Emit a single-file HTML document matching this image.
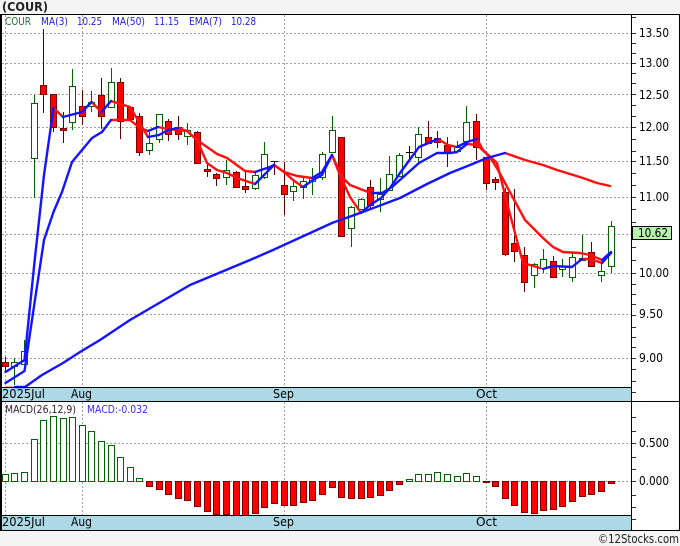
<!DOCTYPE html>
<html>
<head>
<meta charset="utf-8">
<title>COUR</title>
<style>
html,body{margin:0;padding:0;width:680px;height:546px;overflow:hidden;background:#f4f4f4}
svg{display:block}
text{font-family:"DejaVu Sans",sans-serif;font-size:11px}
.y{font-size:12px;fill:#000}
</style>
</head>
<body>
<svg width="680" height="546" viewBox="0 0 680 546" xmlns="http://www.w3.org/2000/svg">
<rect x="0" y="0" width="680" height="546" fill="#f4f4f4"/>
<rect x="0" y="14" width="680" height="517" fill="#fff"/>
<text x="2" y="11" style="font-weight:bold;font-size:12px" textLength="46" lengthAdjust="spacingAndGlyphs" fill="#222">(COUR)</text>

<!-- grid -->
<g stroke="#a0a0a0" stroke-width="1" stroke-dasharray="2 2" fill="none" shape-rendering="crispEdges">
<path d="M2 33.5H632M2 63.5H632M2 94.5H632M2 127.5H632M2 161.5H632M2 197.5H632M2 234.5H632M2 273.5H632M2 314.5H632M2 358.5H632"/>
<path d="M2 443.5H632M2 481.5H632"/>
<path d="M5.5 15V387M82.5 15V387M284.5 15V387M486.5 15V387M5.5 402V515M82.5 402V515M284.5 402V515M486.5 402V515"/>
</g>

<!-- bands -->
<rect x="1" y="387" width="631" height="14" fill="#add8e6"/>
<rect x="1" y="515" width="631" height="15" fill="#add8e6"/>

<!-- candles: green wicks -->
<path fill="none" stroke="#006400" shape-rendering="crispEdges" d="M14.5 358V385M24.5 340V365M34.5 95V198M72.5 69V130M91.5 91V112M111.5 68V108M149.5 132V155M159.5 114V143M187.5 123V145M226.5 160V185M255.5 172V190M264.5 142V179M293.5 180V201M303.5 178V199M312.5 168V195M322.5 152V180M332.5 116V152M351.5 206V247M361.5 198V210M380.5 178V212M389.5 156V190M399.5 153V176M418.5 127V162M457.5 141V151M466.5 106V141M534.5 263V288M543.5 249V273M562.5 259V277M572.5 252V282M582.5 235V260M601.5 263V282M611.5 221V273"/>
<!-- red wicks -->
<path fill="none" stroke="#600000" shape-rendering="crispEdges" d="M5.5 357V372M43.5 29V113M53.5 94V132M63.5 112V143M82.5 90V125M101.5 78V129M120.5 78V139M130.5 106V119M139.5 113V156M168.5 119V141M178.5 116V140M197.5 131V163M207.5 164V177M216.5 173V186M236.5 171V187M245.5 172V193M274.5 161V175M271 161.5H278M284.5 162V215M341.5 137V236M370.5 180V209M428.5 121V143M437.5 131V148M447.5 137V167M476.5 114V160M486.5 157V190M495.5 177V190M505.5 188V256M514.5 189V262M524.5 247V292M553.5 256V277M591.5 242V266"/>
<path fill="none" stroke="#000" shape-rendering="crispEdges" d="M409.5 146V160M406 152.5H413"/>
<!-- green bodies -->
<path fill="#fff" stroke="#006400" shape-rendering="crispEdges" d="M11.5 362.5h6v4h-6zM21.5 351.5h6v13h-6zM31.5 103.5h6v55h-6zM69.5 86.5h6v36h-6zM88.5 102.5h6v4h-6zM108.5 82.5h6v25h-6zM146.5 143.5h6v7h-6zM156.5 114.5h6v25h-6zM184.5 130.5h6v6h-6zM223.5 170.5h6v7h-6zM252.5 175.5h6v13h-6zM261.5 154.5h6v23h-6zM290.5 186.5h6v5h-6zM300.5 181.5h6v6h-6zM309.5 177.5h6v4h-6zM319.5 154.5h6v23h-6zM329.5 130.5h6v22h-6zM348.5 207.5h6v21h-6zM358.5 199.5h6v10h-6zM377.5 194.5h6v5h-6zM386.5 174.5h6v16h-6zM396.5 155.5h6v21h-6zM415.5 134.5h6v23h-6zM454.5 147.5h6v4h-6zM463.5 122.5h6v19h-6zM531.5 264.5h6v11h-6zM540.5 259.5h6v9h-6zM559.5 266.5h6v3h-6zM569.5 257.5h6v20h-6zM579.5 258.5h6v2h-6zM598.5 271.5h6v4h-6zM608.5 226.5h6v40h-6z"/>
<!-- red bodies -->
<path fill="#f00" stroke="#800000" shape-rendering="crispEdges" d="M2.5 362.5h6v4h-6zM40.5 85.5h6v9h-6zM50.5 94.5h6v33h-6zM60.5 128.5h6v2h-6zM79.5 106.5h6v10h-6zM98.5 95.5h6v21h-6zM117.5 82.5h6v39h-6zM127.5 107.5h6v12h-6zM136.5 116.5h6v36h-6zM165.5 121.5h6v13h-6zM175.5 127.5h6v7h-6zM194.5 132.5h6v31h-6zM204.5 169.5h6v2h-6zM213.5 174.5h6v4h-6zM233.5 172.5h6v15h-6zM242.5 186.5h6v3h-6zM281.5 185.5h6v9h-6zM338.5 137.5h6v99h-6zM367.5 187.5h6v18h-6zM425.5 137.5h6v6h-6zM434.5 138.5h6v4h-6zM444.5 145.5h6v8h-6zM473.5 121.5h6v26h-6zM483.5 157.5h6v26h-6zM492.5 179.5h6v3h-6zM502.5 192.5h6v62h-6zM511.5 243.5h6v8h-6zM521.5 255.5h6v27h-6zM550.5 261.5h6v16h-6zM588.5 252.5h6v14h-6z"/>

<!-- lines -->
<g fill="none" stroke-width="2.4" stroke-linejoin="round" stroke-linecap="round">
<g stroke="#ff1010">
<polyline points="5.5,387 15,387" stroke-width="1.5" stroke="#ff8080"/>
<polyline points="505,153 525,160 543,165 557,170 583,178 597,183 610,186"/>
<polyline points="53.5,108 63,117"/>
<polyline points="91.5,102 101.5,112"/>
<polyline points="111,101 130,107 148,137"/>
<polyline points="178,128 187,131 197,140 207,163 217,170 227,173 237,178 255,184"/>
<polyline points="274,165 284,172 293,180 303,187"/>
<polyline points="332,155 340,175 350,197 361,213"/>
<polyline points="438,139 448,145 457,147"/>
<polyline points="477,139 483,150 497,163 507,203 515,233 523,263 540,268"/>
<polyline points="582,259 590,259 602,263"/>
<polyline points="111,120 130,120 140,128 148,131"/>
<polyline points="158,127 168,129 187,131 197,140 217,154 227,158 245,171 255,172"/>
<polyline points="274,165 284,172 297,176 312,178"/>
<polyline points="332,155 342,177 350,185 368,192"/>
<polyline points="467,144 477,145 490,157 498,170 525,220 543,238 553,247 563,252 580,253 590,255 602,260"/>
</g>
<g stroke="#1414ff">
<polyline points="15,387 25,387 42,375 63,363 80,352 100,340 130,320 190,285 250,260 273,250 332,223 360,213 400,198 427,184 450,173 470,165 487,158 505,153"/>
<polyline points="5.5,372 24.5,360 34.5,262 44,175 53.5,108"/>
<polyline points="63,117 82,112 91.5,102"/>
<polyline points="101.5,112 111,101"/>
<polyline points="148,137 159,135 168,130 178,128"/>
<polyline points="255,184 274,165"/>
<polyline points="303,187 313,180 322,175 332,155"/>
<polyline points="361,213 370,205 381,198 390,188 400,173 419,147 438,139"/>
<polyline points="457,147 467,142 477,139"/>
<polyline points="543,269 553,266 572,267 582,259"/>
<polyline points="602,263 611,253"/>
<polyline points="5.5,383 24.5,371 34.5,303 44,240 53.5,212 62,192 72,162 92,138 102,132 111,120"/>
<polyline points="148,131 158,127"/>
<polyline points="255,172 270,167 274,165"/>
<polyline points="312,178 322,172 332,155"/>
<polyline points="372,193 382,193 392,187 419,163 437,153 450,153 457,152 467,144"/>
<polyline points="602,260 611,252"/>
</g>
</g>

<!-- MACD bars -->
<path fill="#fff" stroke="#006400" shape-rendering="crispEdges" d="M2.5 474.5h6v7h-6zM11.5 473.5h6v8h-6zM21.5 472.5h6v9h-6zM31.5 439.5h6v42h-6zM40.5 420.5h6v61h-6zM50.5 416.5h6v65h-6zM60.5 418.5h6v63h-6zM69.5 417.5h6v64h-6zM79.5 425.5h6v56h-6zM88.5 431.5h6v50h-6zM98.5 441.5h6v40h-6zM108.5 445.5h6v36h-6zM117.5 457.5h6v24h-6zM127.5 467.5h6v14h-6zM136.5 478.5h6v3h-6zM406.5 479.5h6v2h-6zM415.5 474.5h6v7h-6zM425.5 474.5h6v7h-6zM434.5 472.5h6v9h-6zM444.5 474.5h6v7h-6zM454.5 476.5h6v5h-6zM463.5 473.5h6v8h-6zM473.5 476.5h6v5h-6z"/>
<path fill="#f00" stroke="#800000" shape-rendering="crispEdges" d="M146.5 481.5h6v5h-6zM156.5 481.5h6v8h-6zM165.5 481.5h6v13h-6zM175.5 481.5h6v17h-6zM184.5 481.5h6v19h-6zM194.5 481.5h6v25h-6zM204.5 481.5h6v30h-6zM213.5 481.5h6v33h-6zM223.5 481.5h6v33h-6zM233.5 481.5h6v34h-6zM242.5 481.5h6v34h-6zM252.5 481.5h6v32h-6zM261.5 481.5h6v26h-6zM271.5 481.5h6v22h-6zM281.5 481.5h6v24h-6zM290.5 481.5h6v24h-6zM300.5 481.5h6v21h-6zM309.5 481.5h6v19h-6zM319.5 481.5h6v13h-6zM329.5 481.5h6v6h-6zM338.5 481.5h6v16h-6zM348.5 481.5h6v17h-6zM358.5 481.5h6v17h-6zM367.5 481.5h6v16h-6zM377.5 481.5h6v14h-6zM386.5 481.5h6v9h-6zM396.5 481.5h6v3h-6zM483.5 481.5h6v1h-6zM492.5 481.5h6v5h-6zM502.5 481.5h6v17h-6zM511.5 481.5h6v24h-6zM521.5 481.5h6v31h-6zM531.5 481.5h6v32h-6zM540.5 481.5h6v29h-6zM550.5 481.5h6v28h-6zM559.5 481.5h6v25h-6zM569.5 481.5h6v20h-6zM579.5 481.5h6v15h-6zM588.5 481.5h6v13h-6zM598.5 481.5h6v10h-6zM608.5 481.5h6v2h-6z"/>

<!-- frame -->
<g fill="none" stroke="#000" shape-rendering="crispEdges">
<path d="M0 14.5H680M0 401.5H680M0 530.5H680M0 387.5H632M0 515.5H632"/>
<path d="M.5 14V531M1.5 14V531M631.5 14V531M679.5 14V531"/>
<path stroke="#333" d="M632 17.5h4M632 33.5h4M632 43.5h4M632 53.5h4M632 63.5h4M632 73.5h4M632 83.5h4M632 94.5h4M632 105.5h4M632 116.5h4M632 127.5h4M632 139.5h4M632 151.5h4M632 161.5h4M632 173.5h4M632 185.5h4M632 197.5h4M632 209.5h4M632 222.5h4M632 234.5h4M632 247.5h4M632 260.5h4M632 273.5h4M632 284.5h4M632 294.5h4M632 304.5h4M632 315.5h4M632 327.5h4M632 337.5h4M632 347.5h4M632 358.5h4M632 369.5h4M632 381.5h4M632 392.5h4M632 417.5h4M632 431.5h4M632 443.5h4M632 457.5h4M632 469.5h4M632 481.5h4M632 495.5h4M632 507.5h4M632 519.5h4"/>
</g>

<!-- legend -->
<text x="5" y="25" fill="#2a6a3a" textLength="26" lengthAdjust="spacingAndGlyphs" style="font-size:11px">COUR</text>
<text x="41" y="25" fill="#2020e0" textLength="27" lengthAdjust="spacingAndGlyphs" style="font-size:11px">MA(3)</text>
<text x="77" y="25" fill="#2020e0" textLength="25" lengthAdjust="spacingAndGlyphs" style="font-size:11px">10.25</text>
<text x="112" y="25" fill="#2020e0" textLength="33" lengthAdjust="spacingAndGlyphs" style="font-size:11px">MA(50)</text>
<text x="154" y="25" fill="#2020e0" textLength="25" lengthAdjust="spacingAndGlyphs" style="font-size:11px">11.15</text>
<text x="189" y="25" fill="#2020e0" textLength="33" lengthAdjust="spacingAndGlyphs" style="font-size:11px">EMA(7)</text>
<text x="231" y="25" fill="#2020e0" textLength="25" lengthAdjust="spacingAndGlyphs" style="font-size:11px">10.28</text>

<!-- y labels -->
<text class="y" x="639" y="37" textLength="30" lengthAdjust="spacingAndGlyphs">13.50</text>
<text class="y" x="639" y="67" textLength="30" lengthAdjust="spacingAndGlyphs">13.00</text>
<text class="y" x="639" y="99" textLength="30" lengthAdjust="spacingAndGlyphs">12.50</text>
<text class="y" x="639" y="131" textLength="30" lengthAdjust="spacingAndGlyphs">12.00</text>
<text class="y" x="639" y="165" textLength="30" lengthAdjust="spacingAndGlyphs">11.50</text>
<text class="y" x="639" y="201" textLength="30" lengthAdjust="spacingAndGlyphs">11.00</text>
<text class="y" x="639" y="277" textLength="30" lengthAdjust="spacingAndGlyphs">10.00</text>
<text class="y" x="639" y="318" textLength="24" lengthAdjust="spacingAndGlyphs">9.50</text>
<text class="y" x="639" y="362" textLength="24" lengthAdjust="spacingAndGlyphs">9.00</text>
<text class="y" x="639" y="447" textLength="30" lengthAdjust="spacingAndGlyphs">0.500</text>
<text class="y" x="639" y="485" textLength="30" lengthAdjust="spacingAndGlyphs">0.000</text>
<rect x="632.5" y="226.5" width="39" height="13" fill="#b6f2ac" stroke="#000" shape-rendering="crispEdges"/>
<text class="y" x="638" y="237" textLength="30" lengthAdjust="spacingAndGlyphs">10.62</text>

<!-- band labels -->
<text class="y" x="2" y="398" textLength="43" lengthAdjust="spacingAndGlyphs">2025Jul</text>
<text class="y" x="71" y="398" textLength="21" lengthAdjust="spacingAndGlyphs">Aug</text>
<text class="y" x="273" y="398" textLength="21" lengthAdjust="spacingAndGlyphs">Sep</text>
<text class="y" x="476" y="398" textLength="21" lengthAdjust="spacingAndGlyphs">Oct</text>
<text class="y" x="2" y="526" textLength="43" lengthAdjust="spacingAndGlyphs">2025Jul</text>
<text class="y" x="71" y="526" textLength="21" lengthAdjust="spacingAndGlyphs">Aug</text>
<text class="y" x="273" y="526" textLength="21" lengthAdjust="spacingAndGlyphs">Sep</text>
<text class="y" x="476" y="526" textLength="21" lengthAdjust="spacingAndGlyphs">Oct</text>

<text x="5" y="413" fill="#302030" textLength="71" lengthAdjust="spacingAndGlyphs">MACD(26,12,9)</text>
<text x="87" y="413" fill="#3a2af0" textLength="61" lengthAdjust="spacingAndGlyphs">MACD:-0.032</text>
<text x="598" y="543" fill="#222" style="font-size:12px" textLength="81" lengthAdjust="spacingAndGlyphs">©12Stocks.com</text>
</svg>
</body>
</html>
